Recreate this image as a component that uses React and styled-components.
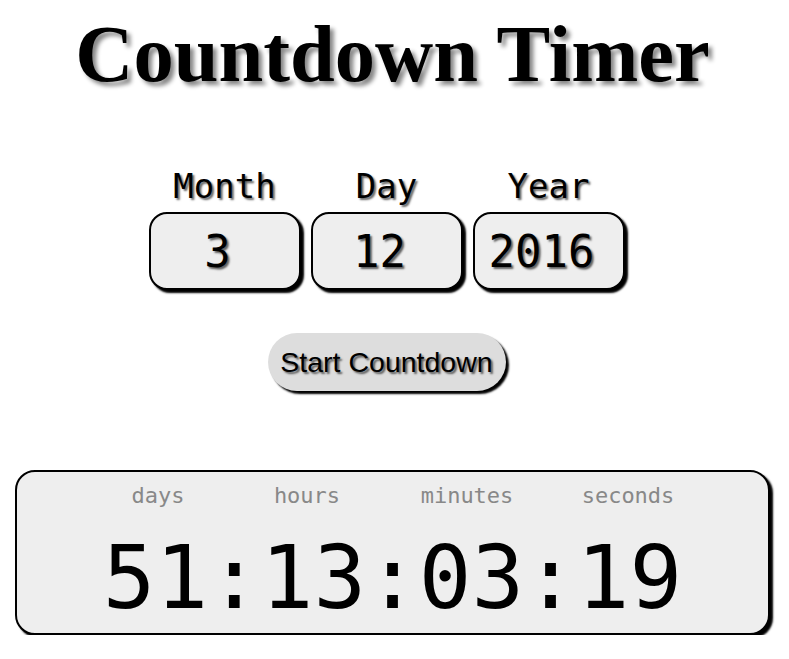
import React from 'react';
import styled, { createGlobalStyle } from 'styled-components';

const GlobalStyle = createGlobalStyle`
  body {
    margin: 0;
    background: #fff;
    font-family: "Liberation Serif", serif;
  }
`;

const Page = styled.div`
  display: flex;
  flex-direction: column;
  align-items: center;
  padding-top: 8px;
`;

const Title = styled.h1`
  margin: 0 0 0 -4px;
  font-family: "Liberation Serif", "Times New Roman", serif;
  font-weight: bold;
  font-size: 80.5px;
  line-height: 92px;
  color: #000;
  text-shadow: 4px 4px 4px #888;
`;

const DateForm = styled.div`
  display: flex;
  gap: 10px;
  margin-top: 66px;
  margin-right: 16px;
`;

const Field = styled.div`
  display: flex;
  flex-direction: column;
  align-items: center;
  gap: 6px;
`;

const Label = styled.span`
  font-family: "DejaVu Sans Mono", monospace;
  font-size: 34px;
  line-height: 40px;
  color: #000;
  text-shadow: 2px 2px 2px rgba(0, 0, 0, 0.6);
`;

const Input = styled.input`
  box-sizing: border-box;
  width: 152px;
  height: 78px;
  padding: 0 14px 0 0;
  border: 2px solid #000;
  border-radius: 18px;
  background: #eee;
  box-shadow: 3px 3px 2px #000;
  font-family: "DejaVu Sans Mono", monospace;
  font-size: 44px;
  text-align: center;
  color: #000;
  text-shadow: 2px 2px 2px rgba(0, 0, 0, 0.6);
  outline: none;
`;

const StartButton = styled.button`
  margin-top: 43px;
  margin-right: 16px;
  width: 238px;
  height: 58px;
  border: none;
  border-radius: 30px;
  background: #ddd;
  box-shadow: 3px 3px 2px #000;
  font-family: "Liberation Sans", Arial, sans-serif;
  font-size: 28.5px;
  color: #000;
  text-shadow: 2px 2px 2px rgba(0, 0, 0, 0.6);
  cursor: pointer;
`;

const Clock = styled.div`
  box-sizing: border-box;
  align-self: flex-start;
  margin: 79px 0 0 15px;
  width: 755px;
  height: 165px;
  padding: 11px 0 0;
  border: 2px solid #000;
  border-radius: 20px;
  background: #eee;
  box-shadow: 3px 3px 2px #000;
  display: flex;
  flex-direction: column;
  align-items: center;
`;

const Units = styled.div`
  display: grid;
  grid-template-columns: 149px 149px 171px 151px;
  margin-left: 2px;
`;

const Unit = styled.span`
  font-family: "DejaVu Sans Mono", monospace;
  font-size: 22px;
  line-height: 26px;
  color: #888;
  text-align: center;
`;

const Digits = styled.div`
  margin-top: 19px;
  font-family: "DejaVu Sans Mono", monospace;
  font-size: 87.5px;
  line-height: 100px;
  color: #000;
`;

export default function App() {
  const fields = [
    { label: 'Month', value: '3' },
    { label: 'Day', value: '12' },
    { label: 'Year', value: '2016' },
  ];
  const units = ['days', 'hours', 'minutes', 'seconds'];

  return (
    <Page>
      <GlobalStyle />
      <Title>Countdown Timer</Title>
      <DateForm>
        {fields.map((f) => (
          <Field key={f.label}>
            <Label>{f.label}</Label>
            <Input defaultValue={f.value} />
          </Field>
        ))}
      </DateForm>
      <StartButton>Start Countdown</StartButton>
      <Clock>
        <Units>
          {units.map((u) => (
            <Unit key={u}>{u}</Unit>
          ))}
        </Units>
        <Digits>51:13:03:19</Digits>
      </Clock>
    </Page>
  );
}
